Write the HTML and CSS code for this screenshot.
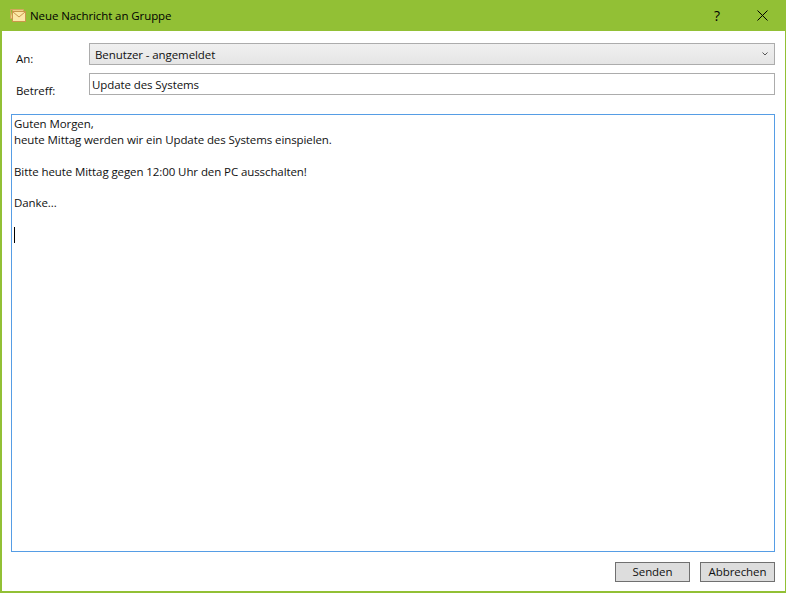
FILE: index.html
```html
<!DOCTYPE html>
<html lang="de">
<head>
<meta charset="utf-8">
<title>Neue Nachricht an Gruppe</title>
<link rel="stylesheet" href="styles.css">
</head>
<body>
<div class="window">
  <header class="titlebar">
    <svg class="app-icon" width="16" height="13" viewBox="0 0 16 13">
      <path d="M2.5 2.5V.5H13.5V2.5M.5 .5V9.5H2.5" fill="#eccf86" stroke="#d3a75c"/>
      <path d="M.5 .5H2.5" stroke="#d3a75c"/>
      <rect x="2.5" y="2.5" width="13" height="10" fill="#fbe8a6" stroke="#c9974a"/>
      <path d="M3 3L9 8L15 3" fill="none" stroke="#c9974a"/>
    </svg>
    <span class="title">Neue Nachricht an Gruppe</span>
    <span class="help">?</span>
    <svg class="close" width="11" height="11" viewBox="0 0 11 11">
      <path d="M.5 .5L10.5 10.5M10.5 .5L.5 10.5" stroke="#000" stroke-width="1" fill="none"/>
    </svg>
  </header>
  <main class="content">
    <div class="form">
      <label class="label label-an">An:</label>
      <div class="combo">
        <span>Benutzer - angemeldet</span>
        <svg class="chevron" width="6" height="4" viewBox="0 0 6 4">
          <path d="M.5 .5L3 3L5.5 .5" fill="none" stroke="#555" stroke-width="1"/>
        </svg>
      </div>
      <label class="label label-betreff">Betreff:</label>
      <div class="input">Update des Systems</div>
    </div>
    <div class="message">
      <p class="line">Guten Morgen,</p>
      <p class="line">heute Mittag werden wir ein Update des Systems einspielen.</p>
      <p class="line">&nbsp;</p>
      <p class="line">Bitte heute Mittag gegen 12:00 Uhr den PC ausschalten!</p>
      <p class="line">&nbsp;</p>
      <p class="line">Danke...</p>
      <p class="line">&nbsp;</p>
      <p class="line"><span class="caret"></span></p>
    </div>
    <div class="actions">
      <button class="btn" type="button">Senden</button>
      <button class="btn" type="button">Abbrechen</button>
    </div>
  </main>
</div>
</body>
</html>
```
FILE: styles.css
```css
* { box-sizing: border-box; }
html, body { margin: 0; padding: 0; }
body {
  width: 786px;
  height: 593px;
  overflow: hidden;
  font-family: "Open Sans", "Noto Sans", sans-serif;
  font-size: 11.5px;
  letter-spacing: -0.09px;
  color: #111;
  background: #fff;
}
.window {
  width: 786px;
  height: 593px;
  display: flex;
  flex-direction: column;
  border: solid #92c035;
  border-width: 0 1px 2px 2px;
}
.titlebar {
  height: 31px;
  margin: 0 -1px 0 -2px;
  background: #92c035;
  display: flex;
  align-items: center;
  padding-left: 10px;
  color: #000;
  flex: none;
}
.app-icon { flex: none; }
.title { margin-left: 4px; }
.help { margin-left: auto; font-size: 14px; width: 12px; text-align: center; }
.close { margin: 0 18px 0 34px; flex: none; }
.content {
  flex: 1;
  display: flex;
  flex-direction: column;
  padding: 12px 10px 9px 9px;
  min-height: 0;
}
.form {
  display: grid;
  grid-template-columns: 78px 1fr;
  grid-template-rows: 22px 22px;
  row-gap: 8px;
}
.label { padding-left: 5px; line-height: 16px; }
.label-an { padding-top: 8px; }
.label-betreff { padding-top: 10px; }
.combo {
  border: 1px solid #acacac;
  background: linear-gradient(#f0f0f0, #e5e5e5);
  display: flex;
  align-items: center;
  justify-content: space-between;
  padding: 0 6px 0 5px;
}
.chevron { flex: none; }
.input {
  border: 1px solid #acacac;
  background: #fff;
  padding: 1px 2px 0;
  line-height: 20px;
}
.message {
  flex: 1;
  min-height: 0;
  margin-top: 19px;
  border: 1px solid #569de5;
  padding: 1px 2px;
  background: #fff;
}
.line { margin: 0; height: 15.9px; line-height: 15.9px; }
.caret {
  display: inline-block;
  width: 1px;
  height: 16px;
  background: #000;
  vertical-align: top;
}
.actions {
  display: flex;
  justify-content: flex-end;
  gap: 10px;
  margin-top: 10px;
  flex: none;
}
.btn {
  width: 75px;
  height: 20px;
  border: 1px solid #707070;
  background: #dddddd;
  font: inherit;
  letter-spacing: inherit;
  color: #111;
  padding: 0;
  line-height: 18px;
}
```
